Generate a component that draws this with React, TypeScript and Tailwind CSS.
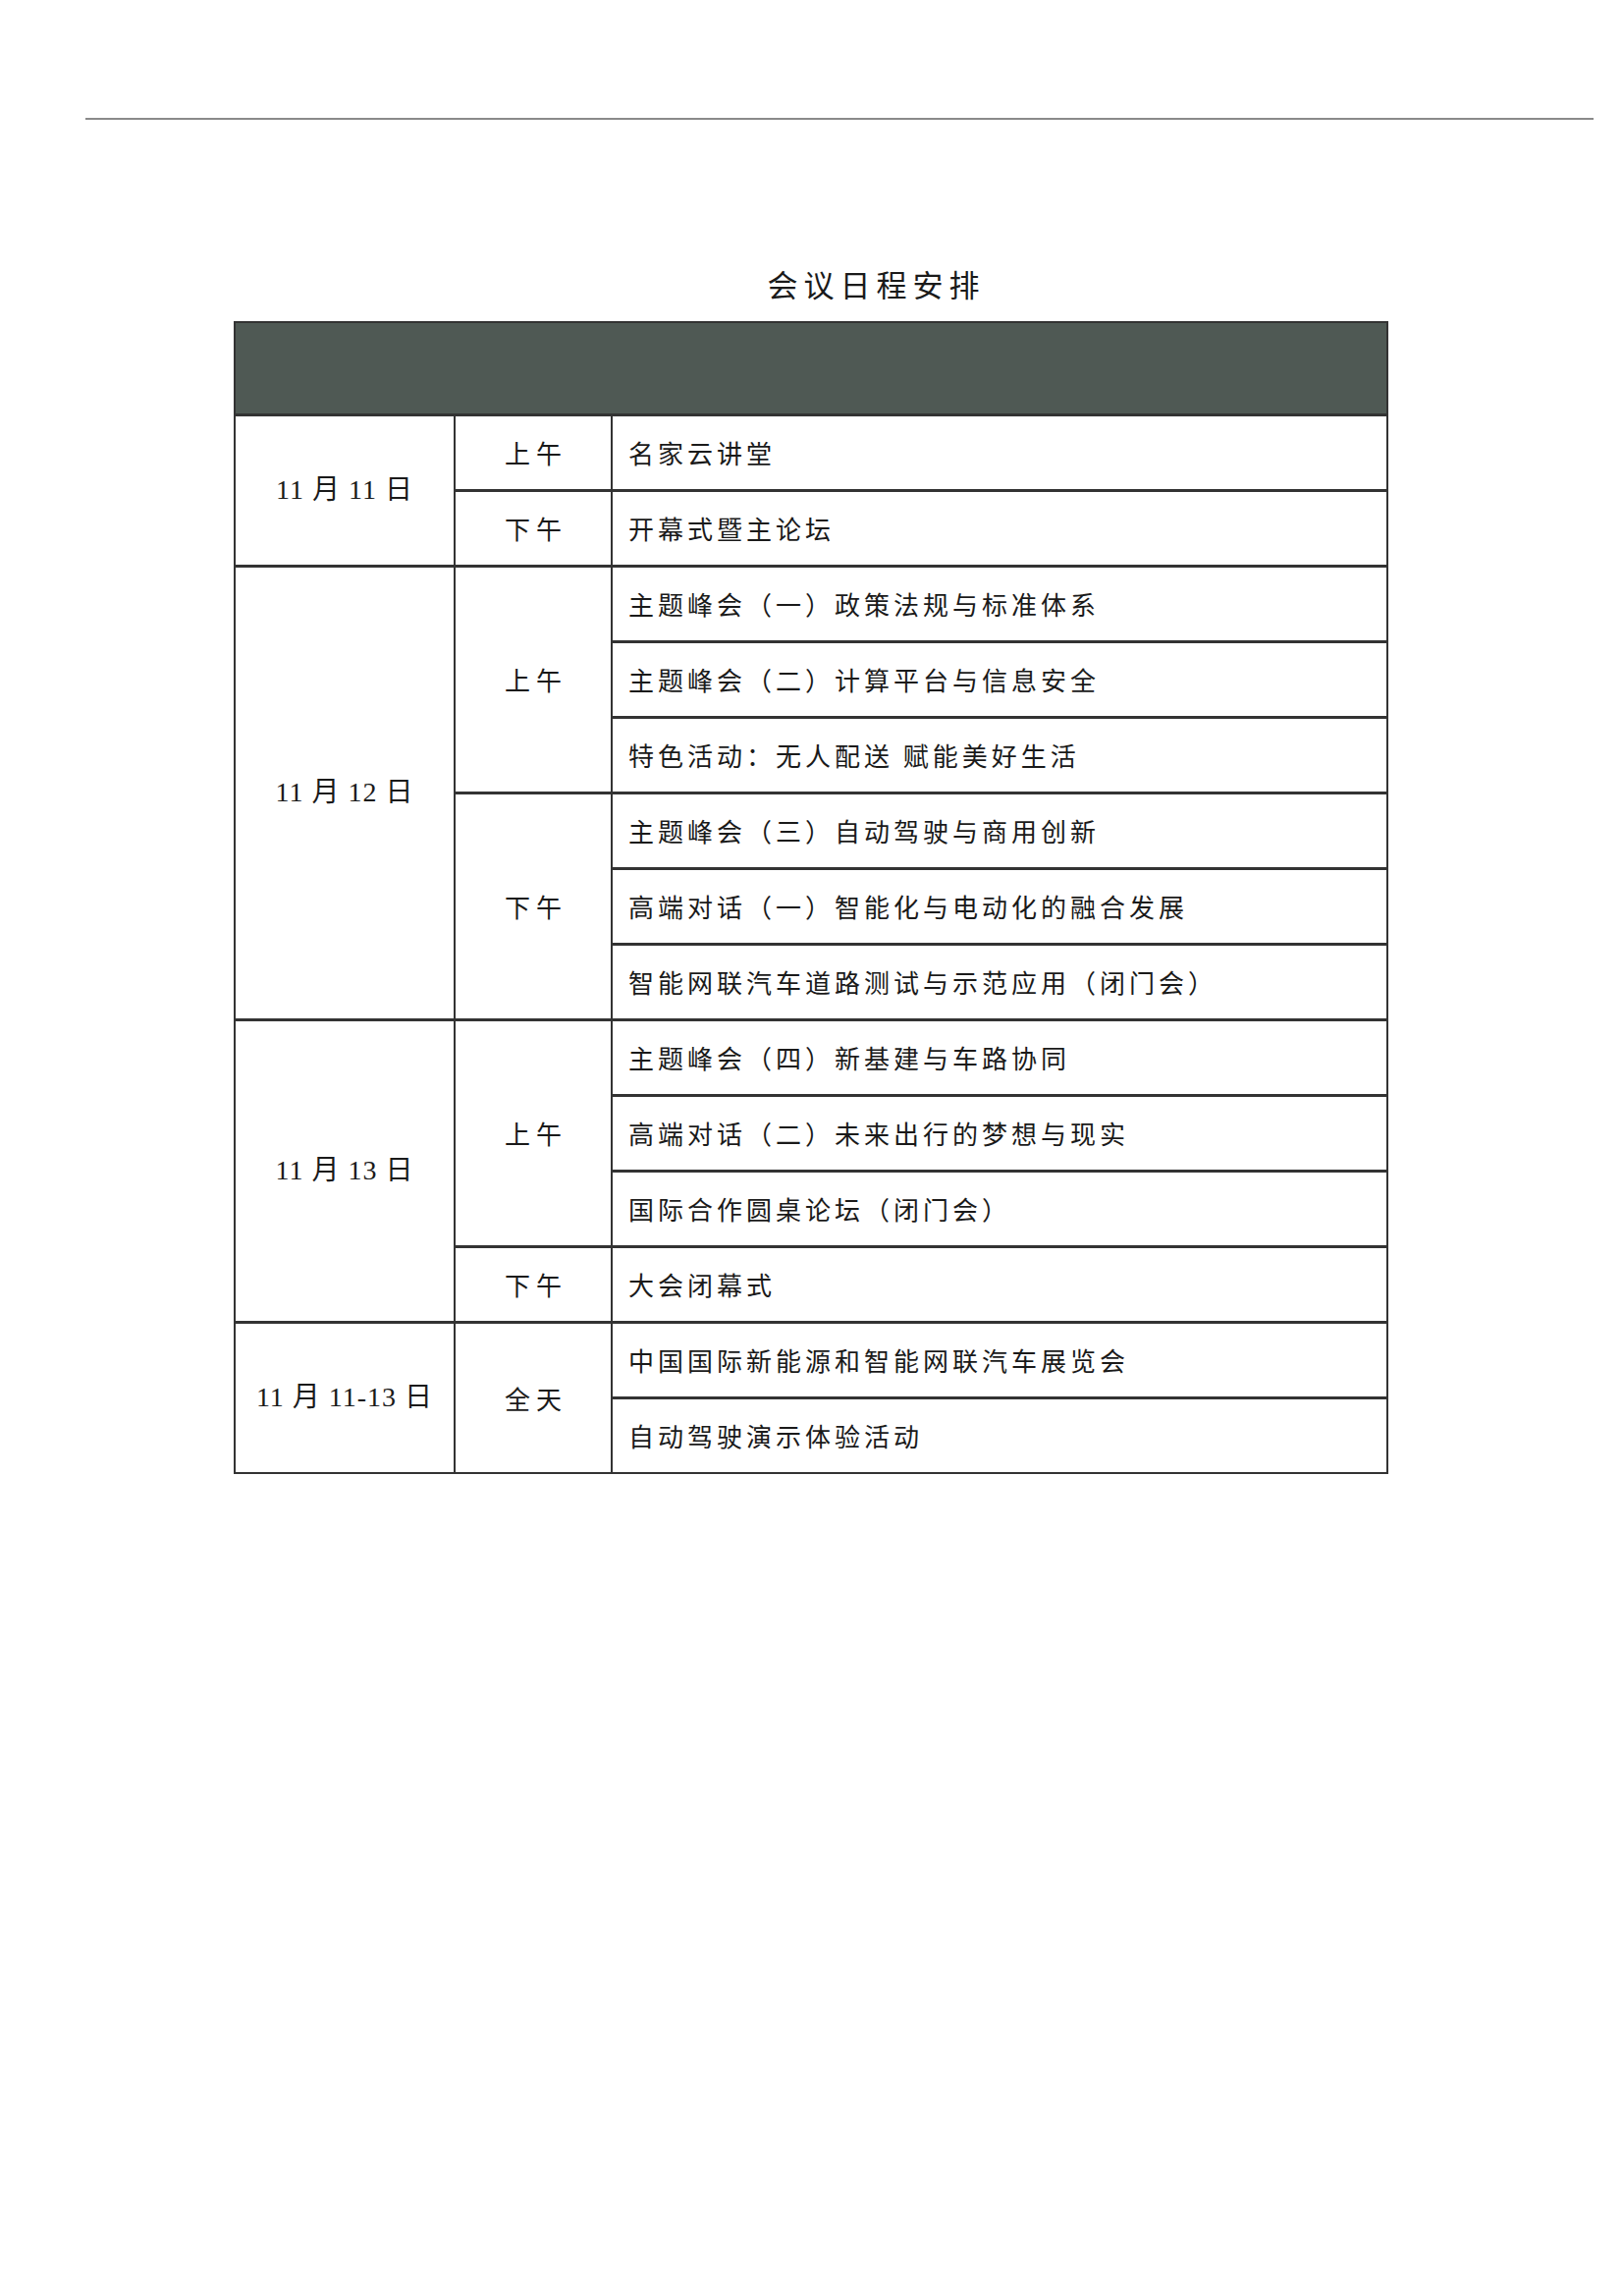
import React from "react";

const cjk = { fontFamily: "'Noto Sans CJK SC', sans-serif" };
const dateFont = { fontFamily: "'Liberation Serif', 'Noto Sans CJK SC', serif" };

type Day = {
  date: string;
  parts: { time: string; items: string[] }[];
};

const SCHEDULE: Day[] = [
  {
    date: "11 月 11 日",
    parts: [
      { time: "上午", items: ["名家云讲堂"] },
      { time: "下午", items: ["开幕式暨主论坛"] },
    ],
  },
  {
    date: "11 月 12 日",
    parts: [
      {
        time: "上午",
        items: [
          "主题峰会（一）政策法规与标准体系",
          "主题峰会（二）计算平台与信息安全",
          "特色活动：无人配送 赋能美好生活",
        ],
      },
      {
        time: "下午",
        items: [
          "主题峰会（三）自动驾驶与商用创新",
          "高端对话（一）智能化与电动化的融合发展",
          "智能网联汽车道路测试与示范应用（闭门会）",
        ],
      },
    ],
  },
  {
    date: "11 月 13 日",
    parts: [
      {
        time: "上午",
        items: [
          "主题峰会（四）新基建与车路协同",
          "高端对话（二）未来出行的梦想与现实",
          "国际合作圆桌论坛（闭门会）",
        ],
      },
      { time: "下午", items: ["大会闭幕式"] },
    ],
  },
  {
    date: "11 月 11-13 日",
    parts: [
      {
        time: "全天",
        items: ["中国国际新能源和智能网联汽车展览会", "自动驾驶演示体验活动"],
      },
    ],
  },
];

export default function App() {
  // grid rows: header band + one row per item
  const cells: React.ReactNode[] = [];
  let row = 2;
  SCHEDULE.forEach((day, di) => {
    const dayRows = day.parts.reduce((n, p) => n + p.items.length, 0);
    cells.push(
      <div
        key={`d${di}`}
        className="bg-white flex items-center justify-center text-[28px] tracking-[1px] text-[#1a1a1a]"
        style={{ ...dateFont, gridColumn: 1, gridRow: `${row} / span ${dayRows}` }}
      >
        {day.date}
      </div>
    );
    let r = row;
    day.parts.forEach((part, pi) => {
      cells.push(
        <div
          key={`t${di}-${pi}`}
          className="bg-white flex items-center justify-center pl-[6px] text-[26px] tracking-[6px] text-[#1a1a1a]"
          style={{ ...cjk, gridColumn: 2, gridRow: `${r} / span ${part.items.length}` }}
        >
          {part.time}
        </div>
      );
      part.items.forEach((item, ii) => {
        cells.push(
          <div
            key={`i${di}-${pi}-${ii}`}
            className="bg-white flex items-center pl-4 text-[26px] tracking-[4px] text-[#1a1a1a] whitespace-pre"
            style={{ ...cjk, gridColumn: 3, gridRow: r + ii }}
          >
            {item}
          </div>
        );
      });
      r += part.items.length;
    });
    row += dayRows;
  });

  return (
    <div className="w-[1653px] h-[2338px] bg-white relative">
      <div className="pt-[120px] ml-[87px] w-[1536px]">
        <div className="h-[2px] bg-[#8a8a8a]" />
      </div>

      <h1
        className="mt-[144px] pl-[132px] text-center text-[31px] tracking-[6px] text-[#1a1a1a]"
        style={cjk}
      >
        会议日程安排
      </h1>

      <div className="mt-[14px] ml-[238px] w-[1176px]">
        <div className="grid grid-cols-[222px_158px_1fr] grid-rows-[92px_repeat(14,74px)] gap-x-[2px] gap-y-[3px] bg-[#333] border-2 border-[#333]">
          <div className="col-span-3 bg-[#4f5954]" style={{ gridRow: 1 }} />
          {cells}
        </div>
      </div>
    </div>
  );
}
